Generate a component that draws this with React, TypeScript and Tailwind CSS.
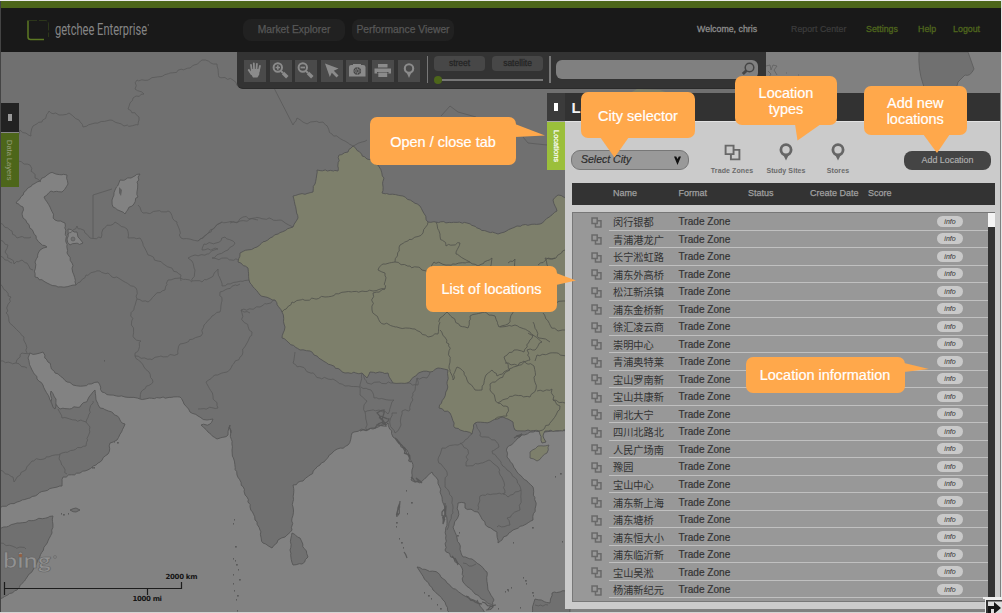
import React from "react";

type Pt = [number, number];

const parse = (s: string): Pt[] =>
  s.trim().split(/\s+/).map((p) => p.split(",").map(Number) as Pt);

// Adds small deterministic irregularities so borders look surveyed, not ruled.
function rough(s: string, closed: boolean, amp = 1.1): string {
  const pts = parse(s);
  let seed = 7;
  const rnd = () => {
    seed = (seed * 1103515245 + 12345) % 2147483648;
    return seed / 2147483648 - 0.5;
  };
  const out: string[] = [];
  const n = closed ? pts.length : pts.length - 1;
  for (let i = 0; i < n; i++) {
    const a = pts[i];
    const b = pts[(i + 1) % pts.length];
    out.push(`${a[0]},${a[1]}`);
    const len = Math.hypot(b[0] - a[0], b[1] - a[1]);
    const steps = len > 300 ? 1 : Math.floor(len / 2.6);
    for (let k = 1; k < steps; k++) {
      const t = k / steps;
      const x = a[0] + (b[0] - a[0]) * t + rnd() * amp * 2;
      const y = a[1] + (b[1] - a[1]) * t + rnd() * amp * 2;
      out.push(`${x.toFixed(1)},${y.toFixed(1)}`);
    }
  }
  if (!closed) out.push(pts[pts.length - 1].join(","));
  return `M${out.join("L")}${closed ? "Z" : ""}`;
}

const ocean =
  "28,358 30,353 36,354 43,352 48,362 55,373 63,378 73,385 83,386 98,382 102,392 110,395 125,397 140,399 160,398 180,397 184,404 190,412 198,416 207,420 213,419 210,424 201,425 208,432 217,439 228,435 230,425 232,450 237,475 247,497 255,520 260,530 263,543 272,548 278,540 285,537 292,530 293,507 293,485 303,481 310,475 320,465 333,452 348,445 352,433 360,430 373,429 388,423 393,437 407,450 413,467 411,480 420,483 432,472 438,480 442,497 447,520 445,550 457,562 462,568 463,582 475,594 493,606 494,600 488,590 487,572 480,565 472,559 463,557 457,538 453,527 458,517 458,503 465,503 465,508 478,512 488,527 497,532 498,543 513,530 533,520 536,505 533,487 517,472 507,457 507,448 520,437 530,432 545,432 570,430 570,620 -5,620 -5,509 17,502 30,498 45,491 62,486 63,477 85,471 98,463 108,454 110,443 117,440 125,424 113,413 100,408 96,400 95,390 88,399 80,407 60,409 50,400 45,390 32,370";

const lakes = [
  "16,203 24,192 37,182 50,173 67,175 68,184 62,192 51,191 44,197 50,207 55,220 65,223 67,253 72,263 76,285 58,287 47,283 35,277 35,262 40,250 47,247 40,243 27,223 23,218 23,207",
  "68,229 77,232 78,237 83,243 70,245 67,239",
  "115,190 120,180 131,178 140,174 137,182 138,197 125,214 113,207 112,200",
];

const islands = [
  "-5,529 20,523 53,516 52,533 33,570 17,590 -5,602",
  "292,533 300,538 308,557 302,564 293,565 290,550",
  "417,567 438,573 447,583 463,595 477,602 488,616 450,616 445,602 433,590",
  "570,589 552,593 550,603 535,599 531,616 570,616",
  "70,510 76,508 80,510 76,512",
  "51,391 56,399 55,409 51,402",
];

const china =
  "353,146 367,159 378,165 384,178 382,193 403,196 420,206 428,222 467,223 480,229 498,234 517,226 540,224 557,211 553,200 558,195 570,199 570,430 545,431 543,436 546,442 542,443 539,431 515,430 513,422 503,417 490,422 475,423 472,434 455,428 450,413 439,408 447,390 448,370 438,368 430,372 421,372 407,383 393,383 388,373 370,372 367,378 362,373 345,373 322,360 310,351 300,350 282,338 285,327 282,312 275,300 260,295 250,283 248,268 238,262 240,253 257,247 270,238 293,227 298,218 293,196 313,192 317,170 338,171 339,155 348,152";

const provinces = [
  "282,312 292,302 325,297 345,292 373,291 385,289 385,273 378,270 383,264 395,262 400,245 423,233 428,222",
  "395,262 410,266 428,271 434,262 448,265 470,262",
  "385,289 373,293 372,310 380,322 400,328 415,329 428,337 438,334 440,318 447,312 460,326 468,328 470,316 485,312 495,316 499,327 508,324 513,310",
  "436,222 440,236 446,246 460,243 456,254 468,261 478,266 492,258 490,268",
  "440,330 449,344 450,370 453,380 457,367 464,372 467,380 475,390 482,390 486,375 492,370 497,376 510,370 504,357 514,350 524,352 533,335 528,333",
  "505,363 520,365 530,360 527,350 535,350 542,342 530,332 515,325 500,327",
  "490,384 500,378 512,368 524,361 534,366 536,389 530,397 515,395 498,403 490,390 490,384",
  "535,361 537,355 550,353 570,356",
  "537,391 552,389 553,400 560,406 556,415 549,425 539,431",
  "498,403 508,407 507,416 495,419",
  "508,263 515,259 513,269 507,268 502,274",
  "538,265 548,258 556,258 565,250",
  "549,270 545,258 555,258",
  "543,313 550,325 558,331 568,331",
  "533,322 539,338 550,342",
  "543,302 568,302",
  "553,400 565,403",
];

const borders = [
  "18,137 20,130 31,136 33,126 42,122 49,111 59,115 69,113 79,120 83,127 95,123 110,120 124,126 138,125 139,117 128,109 133,98 144,94 135,89 137,80 150,79 170,73 190,68 202,60 217,64 219,77 233,80 239,87",
  "293,125 297,118 305,123 323,122 332,134 345,141 353,146 367,140",
  "18,161 30,165 35,178 41,182",
  "0,223 12,231 17,238 31,237",
  "0,240 8,245 5,252 14,264 22,260 33,270",
  "0,256 12,263",
  "0,284 11,297 6,313 12,325 24,337 27,353",
  "0,361 16,363 22,353 30,353",
  "16,363 27,368",
  "67,235 77,226 85,233 90,238 101,238 103,229 115,222 127,229 128,238 140,238 148,255 165,265 181,275 181,281",
  "138,205 143,213 168,211 177,222 181,238 198,241 222,222 238,222 243,217 258,220",
  "198,241 208,233 215,227 222,222",
  "192,261 188,258 195,255 207,254 218,249 202,250 204,244 216,243 225,237 235,243 228,250 219,254",
  "192,261 195,270 192,281 202,282 210,278 218,269 222,286 237,282 250,280",
  "219,254 212,258 238,260",
  "76,285 86,275 100,271 120,279 136,288 137,299 148,302 155,295 165,290 168,280 180,278 192,282",
  "137,299 131,314 134,338 141,341 135,356 144,367 149,372 153,382 141,392 140,399",
  "135,356 150,359 178,354 180,344 201,336 204,325 212,316 220,312 222,301 220,292 240,284",
  "250,313 241,310 243,321 252,332 247,343 240,357 227,372 215,375 206,382 213,396 218,408 198,409",
  "230,223 240,221 260,218 280,220 293,227",
  "241,310 260,307 275,300",
  "0,470 13,477 14,482 32,461 60,454 86,446 90,427 86,422 62,418 58,409",
  "60,454 59,459 67,474",
  "86,422 93,401",
  "0,543 12,546 26,549",
  "295,352 293,363 320,378 333,379 345,386 360,387 362,373",
  "362,373 367,383 393,383",
  "360,387 360,395 367,401 364,405 365,412 379,410 388,414 394,400 374,398 371,390 361,387",
  "365,412 367,430",
  "407,383 418,385 417,378 427,378 430,372",
  "417,378 413,395 410,410 402,411 401,425 395,433 390,424 392,413 397,413",
  "472,434 458,445 442,448 438,460 447,472 445,487 452,497 453,513 447,530",
  "460,443 468,450 466,466 478,464 489,460 498,467 503,480 505,493 493,494 480,496 478,510",
  "475,423 482,437 495,440 499,447 492,451 507,470 517,480 521,490 508,497 503,494",
  "521,490 520,510 507,518 510,525 497,527",
  "463,563 472,566 476,564",
  "548,605 535,605",
];

const coastNoise = [
  "360,431 372,428 384,422 377,413 384,410 383,424 389,419 380,416 386,426 376,425",
  "395,438 405,449", "398,441 410,459", "404,447 411,462",
  "411,477 415,482 420,481 416,478 422,483",
  "445,503 443,524 446,507 442,512 445,520", "400,501 398,515 399,505 397,517",
  "466,596 475,602 482,604 477,600", "482,602 493,607 486,610 496,605", "452,556 458,565 455,558",
  "514,438 522,434 516,436", "229,427 231,433", "404,552 407,558",
];

const specks: Pt[] = [
  [396, 522], [396, 526], [399, 538], [401, 542], [403, 547], [406, 490], [411, 502], [407, 513],
  [424, 592], [428, 595], [431, 598], [437, 604], [440, 608], [498, 608], [505, 591], [507, 589], [511, 587],
  [508, 590], [525, 580], [526, 583], [523, 577], [532, 592], [533, 595], [520, 607], [457, 535], [459, 532],
  [513, 542], [532, 527], [233, 523], [234, 519], [235, 546], [233, 558], [235, 560], [236, 564], [238, 569],
  [233, 574], [239, 579], [233, 583], [234, 590], [237, 595], [236, 599], [237, 610], [92, 467], [94, 467],
  [61, 513], [63, 514], [68, 513], [555, 476], [560, 473], [562, 541], [114, 441], [117, 442], [104, 360],
];

function WorldMap() {
  return (
    <svg className="absolute inset-0" width="1002" height="613" viewBox="0 0 1002 613">
      <rect width="1002" height="613" fill="#707070" />
      <rect x="565" y="52" width="437" height="561" fill="#808080" />
      <path d={rough(ocean, true, 0.9)} fill="#828282" stroke="#565656" strokeWidth=".9" />
      <g fill="#828282" stroke="#565656" strokeWidth=".9">
        {lakes.map((d, i) => <path key={i} d={rough(d, true, 1)} />)}
      </g>
      <g fill="#707070" stroke="#565656" strokeWidth=".9">
        {islands.map((d, i) => <path key={i} d={rough(d, true, 0.7)} />)}
      </g>
      <g fill="none" stroke="#595959" strokeWidth=".8">
        {borders.map((d, i) => <path key={i} d={rough(d, false)} />)}
        <path d="M274 88L293 125M93 238V195L112 189M441 116L450 106L458 112L476 117M523 137L528 143L547 145" />
      </g>
      <path d={rough(china, true, 0.8)} fill="#7d7f6b" stroke="#545454" strokeWidth=".9" />
      <path d={rough("530,452 538,446 549,445 547,453 537,461 530,458", true, 0.6)} fill="#7d7f6b" stroke="#545454" strokeWidth=".8" />
      <g fill="none" stroke="#53544e" strokeWidth=".85">
        {provinces.map((d, i) => <path key={i} d={rough(d, false)} />)}
      </g>
      <g fill="none" stroke="#585858" strokeWidth="1.2">
        {coastNoise.map((d, i) => <path key={i} d={rough(d, false, 1.2)} />)}
      </g>
      <g fill="#5b5b5b">
        {specks.map(([x, y], i) => <rect key={i} x={x} y={y} width={i % 3 ? 1 : 1.8} height="1.6" />)}
      </g>
      <circle cx="73" cy="239" r="2" fill="#707070" stroke="#585858" strokeWidth=".6" />
      <path d="M119 187l3 3-1 6-2-3z" fill="#606060" />
      <path d="M565 88H766V93H565Z" fill="#707070" />
      <path d="M630 93L637 89L660 90L668 93Z" fill="#7d7f6b" />
      <path d="M919 52Q918 70 923 84L926 93H955L958 82L965 75Q970 77 974 69L968 52Z" fill="#707070" stroke="#5b5b5b" strokeWidth=".8" />
      <path d="M766 66l4-1 1 5 2-5 4 1-3 4 3 5M768 71l3 3-2 3M786 73h1M798 75h1" fill="none" stroke="#606060" strokeWidth=".8" />
      <g stroke="#1c1c1c" strokeWidth="1.2" fill="none">
        <path d="M4.5 582V595M4.500 588.500H181.500V582M147.500 588V595" />
      </g>
      <g fontFamily="DejaVu Sans, sans-serif" fontWeight="bold" fontSize="7" fill="#161616">
        <text x="165.500" y="579" textLength="32">2000 km</text>
        <text x="132.500" y="601" textLength="29.500">1000 mi</text>
      </g>
      <text x="3" y="568" fontFamily="Lato, sans-serif" fontWeight="bold" fontSize="20" fill="#929292" stroke="#636363" strokeWidth=".6" textLength="48" lengthAdjust="spacingAndGlyphs">bing</text>
      <circle cx="20.500" cy="555.500" r="1.800" fill="#916044" />
      <circle cx="55" cy="557" r="1.500" fill="none" stroke="#686868" strokeWidth=".6" />
    </svg>
  );
}

function Logo() {
  return (
    <svg width="130" height="30" viewBox="0 0 130 30" className="ml-[25px] shrink-0 overflow-visible">
      <path d="M3 5.500V22Q3 24.500 5.500 24.500H19" fill="none" stroke="#5c7823" strokeWidth="1.500" />
      <path d="M4 5.500H20Q23.500 5.500 23.500 9V22" fill="none" stroke="#2f3a1b" strokeWidth=".9" strokeDasharray="8 2" />
      <text x="30" y="20" fontFamily="Roboto, sans-serif" fontWeight="400" fontSize="17" fill="#858585" textLength="92" lengthAdjust="spacingAndGlyphs">getchee Enterprise</text>
      <circle cx="123.300" cy="10" r=".7" fill="#777" />
    </svg>
  );
}

function Header() {
  return (
    <header className="relative flex h-[44px] w-full items-center bg-[#191919]">
      <Logo />
      <div className="ml-[88px] flex gap-[7px] text-[10.300px] text-[#575757] [-webkit-text-stroke:0.25px_#575757]">
        <div className="flex h-[22px] w-[102px] items-center justify-center whitespace-nowrap rounded-[8px] bg-[#212121]">Market Explorer</div>
        <div className="flex h-[22px] w-[102px] items-center justify-center whitespace-nowrap rounded-[8px] bg-[#212121]">Performance Viewer</div>
      </div>
      <nav className="ml-auto mr-[22px] flex items-center whitespace-nowrap text-[8.800px] text-[#4f661d] [-webkit-text-stroke:0.3px_#4f661d]">
        <span className="w-[94px] text-[#8c8c8c] [-webkit-text-stroke:0.3px_#8c8c8c]">Welcome, chris</span>
        <span className="w-[75px] text-[#3d3d3d] [-webkit-text-stroke:0.2px_#3d3d3d]">Report Center</span>
        <span className="w-[52px]">Settings</span>
        <span className="w-[35px]">Help</span>
        <span>Logout</span>
      </nav>
    </header>
  );
}

const icon = "#8b8b8b";

const toolIcons: React.ReactNode[] = [
  <g fill="none" stroke={icon} strokeLinecap="round">
    <path d="M7.700 10L7 5M10 9L9.800 3.300M12.500 9L12.900 3.800M14.800 11L15.900 6" strokeWidth="1.800" />
    <path d="M4.800 10L7.500 14" strokeWidth="2.100" />
    <path d="M7 9H15.800L15.200 14.500L13.500 17.500H9L7 14Z" fill={icon} stroke="none" />
  </g>,
  <g fill="none" stroke={icon}>
    <circle cx="7.800" cy="7.500" r="4.200" strokeWidth="2" />
    <path d="M7.800 5.300V9.700M5.600 7.500H10" strokeWidth="1.600" />
    <path d="M11 11L13 13" strokeWidth="2" />
    <path d="M13 13L17.300 17.300" strokeWidth="3.400" />
  </g>,
  <g fill="none" stroke={icon}>
    <circle cx="7.800" cy="7.500" r="4.200" strokeWidth="2" />
    <path d="M5.500 7.500H10.100" strokeWidth="1.800" />
    <path d="M11 11L13 13" strokeWidth="2" />
    <path d="M13 13L17.300 17.300" strokeWidth="3.400" />
  </g>,
  <path d="M4 3.500L17.500 8.500L12.800 10.800L17.500 15.500L15.500 17.500L10.800 12.800L8.800 17Z" fill={icon} />,
  <g>
    <path d="M3 7Q3 5 5 5H7V4H15V5H17Q19.500 5 19.500 7V16.500H3Z" fill={icon} />
    <circle cx="11.300" cy="11" r="3.800" fill="#444" />
    <path d="M11.300 7.500V14.500M7.800 11H14.800M8.800 8.500L13.800 13.500M13.800 8.500L8.800 13.500" stroke={icon} strokeWidth=".8" />
    <circle cx="11.300" cy="11" r="1" fill="#444" />
  </g>,
  <g fill={icon}>
    <path d="M6 4H15.500V7.500H6ZM2.500 8.500H19V13.500H2.500Z" />
    <path d="M5 12V13.500H16.500V12Z" fill="#4a4a4a" />
    <path d="M6.300 12.500H15.200V17H6.300Z" />
  </g>,
  <g>
    <circle cx="11" cy="8.500" r="4.200" fill="none" stroke={icon} strokeWidth="2.100" />
    <path d="M8.600 12.500H13.400L11 18Z" fill={icon} />
  </g>,
];

function Toolbar() {
  return (
    <div className="relative ml-[237px] flex h-[36.500px] w-[529px] rounded-bl-[6px] border-b border-[#2a2a2a] bg-[#333333] pl-[7px] pt-[8px]">
      <div className="flex gap-[3.600px]">
        {toolIcons.map((node, i) => (
          <div key={i} className="h-[22px] w-[22px] bg-[#4a4a4a]">
            <svg width="22" height="22" viewBox="0 0 22 22">{node}</svg>
          </div>
        ))}
      </div>
      <div className="-mt-[4px] ml-[7px] h-[27px] w-[1.500px] bg-[#777]" />
      <div className="-mt-[4px] ml-[6px] w-[110px]">
        <div className="flex gap-[7px] text-[8.500px] leading-[14px] text-[#252525] [-webkit-text-stroke:0.3px_#252525]">
          <div className="h-[15px] w-[51px] rounded-[4px] bg-[#474747] text-center">street</div>
          <div className="h-[15px] w-[51px] rounded-[4px] bg-[#474747] text-center">satellite</div>
        </div>
        <div className="mt-[5px] flex h-[8px] items-center">
          <div className="h-[8px] w-[8px] rounded-full bg-[#4d661a]" />
          <div className="h-[2px] w-[101px] bg-[#777]" />
        </div>
      </div>
      <div className="-mt-[4px] ml-[5px] h-[27px] w-[1.500px] bg-[#777]" />
      <div className="ml-[5px] flex h-[19px] w-[202px] justify-end rounded-[6px] bg-[#808080]">
        <svg width="18" height="19" viewBox="0 0 18 19">
          <circle cx="9.500" cy="7.500" r="4.300" fill="none" stroke="#454545" strokeWidth="1.500" />
          <path d="M6.500 10.500L2.800 14" stroke="#454545" strokeWidth="3" />
        </svg>
      </div>
    </div>
  );
}

function DataLayersTab() {
  return (
    <div className="absolute left-px top-[103px] w-[17.500px]">
      <div className="flex h-[30px] items-center justify-center border-b border-[#888] bg-[#222]">
        <div className="h-[7px] w-[4px] bg-[#999]" />
      </div>
      <div className="flex h-[54px] items-center justify-center bg-[#4d661a]">
        <span className="whitespace-nowrap text-[7.500px] text-[#98a07f] [writing-mode:vertical-rl]">Data Layers</span>
      </div>
    </div>
  );
}

function Squares({ size, color, width }: { size: number; color: string; width: number }) {
  return (
    <svg width={size} height={size} viewBox="0 0 16 16" fill="none" stroke={color} strokeWidth={width}>
      <path d="M1.500 1.500H9V9.500H1.500Z" />
      <path d="M9 5.500H14.500V14.500H6.500V9.500" />
    </svg>
  );
}

function Marker() {
  return (
    <svg width="14" height="18" viewBox="0 0 14 18">
      <circle cx="7" cy="6.800" r="5.100" fill="none" stroke="#666" strokeWidth="2.800" />
      <path d="M4.500 12.500H9.500L7 17.500Z" fill="#666" />
    </svg>
  );
}

const names = [
  "闵行银都", "青浦港龙广", "长宁淞虹路", "浦东外高桥", "松江新浜镇", "浦东金桥新", "徐汇凌云商", "崇明中心",
  "青浦奥特莱", "宝山罗南新", "宝山共康新", "闸北大宁", "四川北路北", "人民广场南", "豫园", "宝山中心",
  "浦东新上海", "浦东塘桥", "浦东恒大小", "浦东临沂新", "宝山吴淞", "杨浦新纪元",
];

function Row({ name }: { name: string }) {
  return (
    <div className="flex h-[17.520px] shrink-0 items-center pl-[18px]">
      <div className="w-[18px] pt-px"><Squares size={11} color="#696969" width={2.2} /></div>
      <div className="flex h-full flex-1 items-center border-b border-[#c0c0c0] pl-[4px] text-[#333]">
        <div className="w-[65.500px] whitespace-nowrap pt-[2px] font-['Noto_Sans_CJK_SC',sans-serif] text-[10.200px] leading-[12px]">{name}</div>
        <div className="flex-1 pt-[2px] text-[10.100px] leading-[12px] [-webkit-text-stroke:0.2px_#333]">Trade Zone</div>
        <div className="mr-[25px] flex h-[11px] w-[26px] items-center justify-center rounded-full bg-[#c9c9c9] text-[7px] italic leading-none">info</div>
      </div>
    </div>
  );
}

function LocationsPanel() {
  return (
    <section className="absolute left-[547px] top-[93px] flex h-[516px] w-[453px]">
      <div className="w-[18px] shrink-0">
        <div className="flex h-[29px] items-center justify-center border-b border-[#aaa] bg-[#3b3b3b]">
          <div className="h-[8px] w-[4px] bg-white" />
        </div>
        <div className="flex h-[48px] items-center justify-center bg-[#9bbf3b]">
          <span className="whitespace-nowrap text-[7.500px] text-white [-webkit-text-stroke:0.2px_white] [writing-mode:vertical-rl]">Locations</span>
        </div>
      </div>
      <div className="flex min-w-0 flex-1 flex-col bg-[#cbcbcb]">
        <div className="h-[29px] shrink-0 border-b border-[#e2e2e2] bg-[#323232] pl-[6.500px] text-[15px] font-bold leading-[29px] text-[#f2f2f2]">Locations</div>
        <div className="flex h-[61px] shrink-0 pl-[6px]">
          <div className="mt-[28px] flex h-[20px] w-[118px] items-center justify-between rounded-[9px] border border-[#777] bg-[#999] pl-[9px] pr-[6px] text-[10.500px] italic text-[#2c2c2c] [-webkit-text-stroke:0.2px_#2c2c2c]">
            <span className="whitespace-nowrap">Select City</span>
            <svg width="9" height="9" viewBox="0 0 9 9"><path d="M1 .5H3.200L4.500 3L5.800 .5H8L4.500 9Z" fill="#111" /></svg>
          </div>
          <div className="ml-[18px] flex pt-[21px] text-center text-[7px] font-bold text-[#6a6a6a] [&>div]:flex [&>div]:flex-col [&>div]:items-center [&>div]:whitespace-nowrap">
            <div className="w-[50px]"><span className="h-[19px] pt-px"><Squares size={17} color="#686868" width={1.8} /></span><span className="leading-[17px] tracking-[0.1px]">Trade Zones</span></div>
            <div className="w-[58px]"><span className="h-[19px]"><Marker /></span><span className="leading-[17px] tracking-[0.1px]">Study Sites</span></div>
            <div className="w-[46px]"><span className="h-[19px]"><Marker /></span><span className="leading-[17px] tracking-[0.1px]">Stores</span></div>
          </div>
          <div className="ml-auto mr-[9px] mt-[29px] flex h-[19px] w-[87px] items-center justify-center rounded-[8px] bg-[#444] text-[8.900px] text-[#b0b0b0] [-webkit-text-stroke:0.15px_#b0b0b0]">Add Location</div>
        </div>
        <div className="ml-[7px] flex h-[22px] w-[423px] shrink-0 items-center bg-[#333] pl-[41px] text-[9px] text-[#a0a0a0] [-webkit-text-stroke:0.25px_#a0a0a0]">
          <span className="w-[65.500px]">Name</span>
          <span className="w-[69.500px]">Format</span>
          <span className="w-[62px]">Status</span>
          <span className="w-[58px] whitespace-nowrap">Create Date</span>
          <span>Score</span>
        </div>
        <div className="ml-[7px] mt-[7px] flex h-[390px] w-[423px] shrink-0 border-t border-[#777]">
          <div className="flex w-[416px] flex-col overflow-hidden border-b border-l border-[#777] bg-[#989898]">
            {names.map((name) => <Row key={name} name={name} />)}
          </div>
          <div className="w-[7px] bg-[#333]"><div className="h-[14px] bg-[#f4f4f4]" /></div>
        </div>
      </div>
    </section>
  );
}

interface CalloutProps {
  place: string;
  tail: string;
  points: string;
  children: React.ReactNode;
}

function Callout({ place, tail, points, children }: CalloutProps) {
  return (
    <div className={`absolute flex items-center justify-center whitespace-nowrap rounded-[7px] bg-[#ffa84b] text-center text-[14.500px] leading-[16px] text-white [-webkit-text-stroke:0.2px_white] ${place}`}>
      <div className="pt-px">{children}</div>
      <svg className={`absolute ${tail}`} width="30" height="21" viewBox="0 0 30 21">
        <polygon points={points} fill="#ffa84b" />
      </svg>
    </div>
  );
}

export default function App() {
  return (
    <div className="relative h-[613px] w-[1002px] overflow-hidden bg-[#707070] font-['Liberation_Sans',Arial,sans-serif]">
      <WorldMap />
      <div className="relative h-[8px] border-t border-[#eee] bg-[#4d661a]" />
      <Header />
      <Toolbar />
      <DataLayersTab />
      <LocationsPanel />
      <div className="absolute left-0 top-px h-[611px] w-px bg-[#444]" />
      <div className="absolute right-0 top-0 h-[613px] w-[1.500px] bg-[#e4e4e4]" />
      <div className="absolute bottom-0 left-0 h-px w-full bg-[#d4d4d4]" />
      <svg className="absolute bottom-0 right-0" width="19" height="16" viewBox="0 0 19 16">
        <path d="M0 0H19V16H2V2H0Z" fill="#eee" />
        <path d="M3 3H19V16H3Z" fill="#333" />
        <path d="M5 4.500H19V16H5Z" fill="#ddd" />
        <path d="M5 9H11V5L18 11L12 16H11V12H8V16H5Z" fill="#161616" />
      </svg>
      <Callout place="left-[370px] top-[117px] h-[48px] w-[146px]" tail="left-[145px] top-[7px]" points="0,0 30,11.5 0,13">Open / close tab</Callout>
      <Callout place="left-[581px] top-[92px] h-[46px] w-[114px]" tail="left-[19px] top-[45px]" points="0,0 14.5,20.500 29,0">City selector</Callout>
      <Callout place="left-[735px] top-[75.5px] h-[49px] w-[102px]" tail="left-[60px] top-[48px]" points="0,0 2.5,16.500 26,0">Location<br />types</Callout>
      <Callout place="left-[864px] top-[85.5px] h-[49px] w-[102.500px]" tail="left-[59px] top-[48px]" points="0,0 14,19 27,0">Add new<br />locations</Callout>
      <Callout place="left-[426px] top-[266px] h-[45.500px] w-[131px]" tail="left-[130px] top-[7px]" points="0,0 20,7.500 0,12">List of locations</Callout>
      <Callout place="left-[745.500px] top-[357px] h-[35.500px] w-[159px]" tail="left-[158px] top-[6px]" points="0,0 25,6 0,9">Location information</Callout>
    </div>
  );
}
